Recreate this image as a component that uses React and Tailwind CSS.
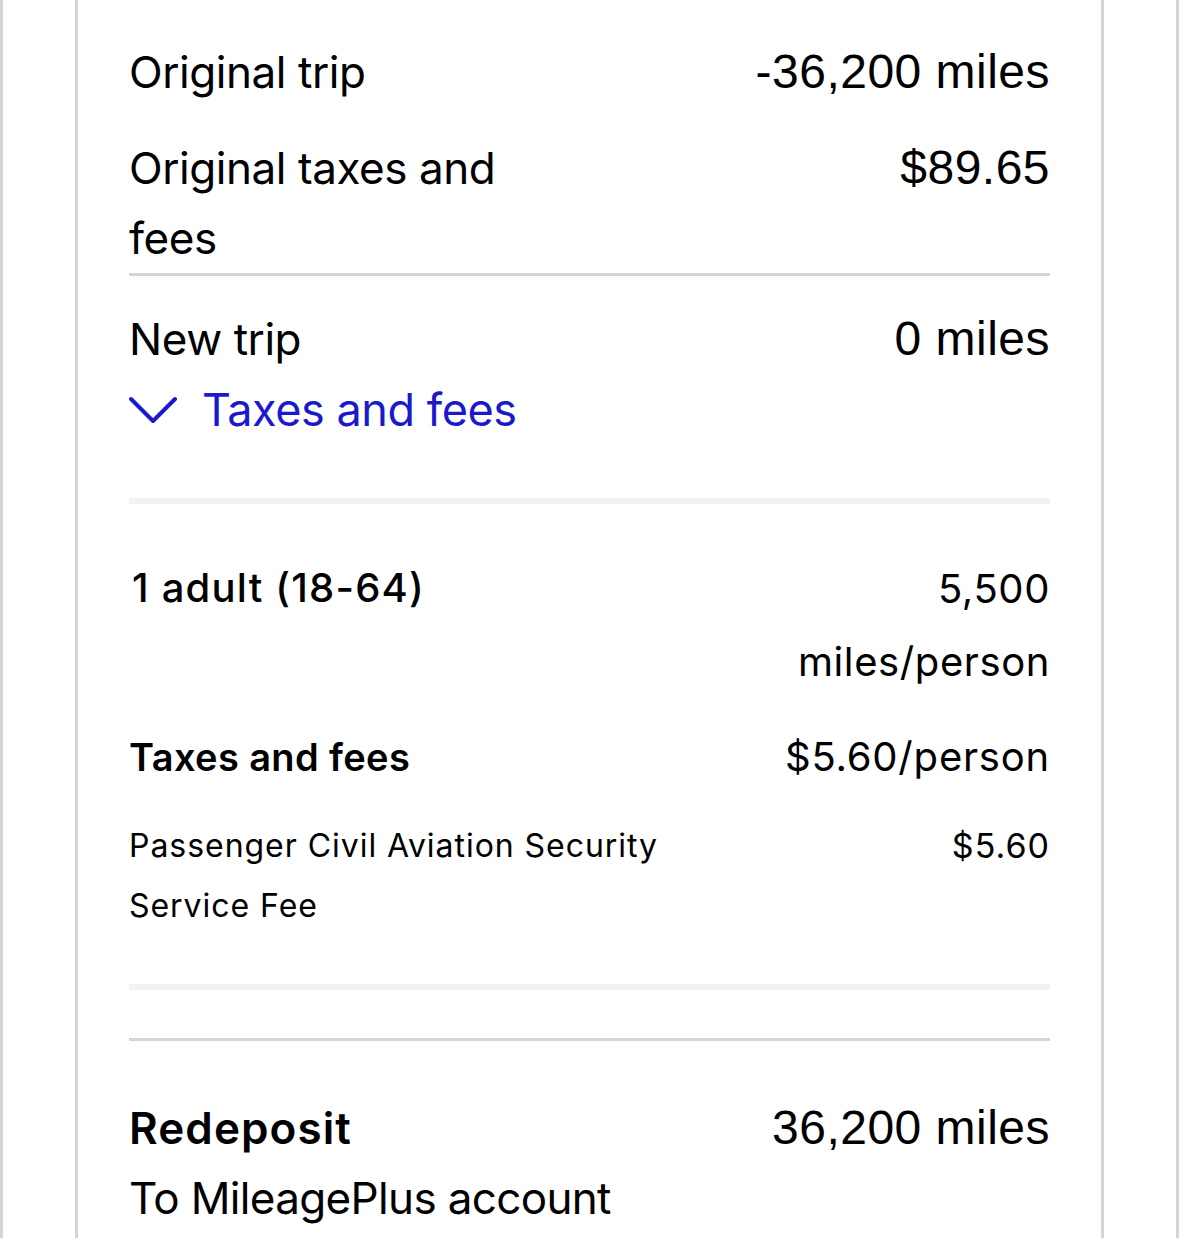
const label = { fontFamily: "Inter, 'Open Sans', sans-serif" };
const num = { fontFamily: "'Liberation Sans', Arial, sans-serif" };

function Row({ left, right, className = "", leading = "leading-[70px]" }) {
  return (
    <div className={`flex justify-between items-start ${className}`}>
      <div className={`text-[44px] tracking-[-0.01em] text-black ${leading}`} style={label}>
        {left}
      </div>
      <div className={`text-[48px] tracking-[0.01em] text-black text-right ${leading}`} style={num}>
        {right}
      </div>
    </div>
  );
}

export default function App() {
  return (
    <div className="min-h-[1238px] bg-white border-x-[3px] border-[#d5d5d5] px-[72px]">
      <div className="min-h-[1238px] border-x-[3px] border-[#d5d5d5] px-[51px]">
        {/* Original */}
        <Row className="pt-[37px]" left="Original trip" right="-36,200 miles" />
        <Row
          className="mt-[26px]"
          left={
            <>
              Original taxes and
              <br />
              fees
            </>
          }
          right="$89.65"
        />
        <div className="h-[3px] bg-[#d5d5d5]" />

        {/* New trip */}
        <Row className="mt-[28px]" left="New trip" right="0 miles" />
        <button className="flex items-center gap-[25px] h-[72px] text-[#1a1acb]">
          <svg width="48" height="28" viewBox="0 0 48 28" fill="none">
            <path d="M2 3 L24 25 L46 3" stroke="currentColor" strokeWidth="4" strokeLinecap="round" strokeLinejoin="round" />
          </svg>
          <span className="text-[45px] tracking-[-0.01em] leading-[72px]" style={label}>
            Taxes and fees
          </span>
        </button>
        <div className="h-[6px] bg-[#f2f2f2] mt-[52px]" />

        {/* Breakdown */}
        <div className="mt-[48px] flex justify-between items-start">
          <div className="text-[40px] font-medium tracking-[0.03em] leading-[72px] text-black pl-[3px]" style={label}>
            1 adult (18-64)
          </div>
          <div className="text-[40px] tracking-[0.015em] leading-[73px] text-black text-right" style={label}>
            5,500
            <br />
            miles/person
          </div>
        </div>
        <div className="mt-[23px] flex justify-between items-start">
          <div className="text-[38px] font-semibold tracking-[0.01em] leading-[72px] text-black" style={label}>
            Taxes and fees
          </div>
          <div className="text-[40px] tracking-[0.02em] leading-[72px] text-black text-right" style={label}>
            $5.60/person
          </div>
        </div>
        <div className="mt-[23px] flex justify-between items-start">
          <div className="text-[32px] tracking-[0.03em] leading-[60px] text-black" style={label}>
            Passenger Civil Aviation Security
            <br />
            Service Fee
          </div>
          <div className="text-[34px] tracking-[0.03em] leading-[60px] text-black text-right" style={label}>
            $5.60
          </div>
        </div>
        <div className="h-[6px] bg-[#f2f2f2] mt-[48px]" />
        <div className="h-[3px] bg-[#d5d5d5] mt-[48px]" />

        {/* Redeposit */}
        <div className="mt-[52px] flex justify-between items-start">
          <div className="text-black" style={label}>
            <div className="text-[44px] font-semibold tracking-[0.025em] leading-[70px]">Redeposit</div>
            <div className="text-[44px] tracking-[-0.015em] leading-[70px]">To MileagePlus account</div>
          </div>
          <div className="text-[48px] tracking-[0.01em] leading-[70px] text-black text-right" style={num}>
            36,200 miles
          </div>
        </div>
      </div>
    </div>
  );
}
